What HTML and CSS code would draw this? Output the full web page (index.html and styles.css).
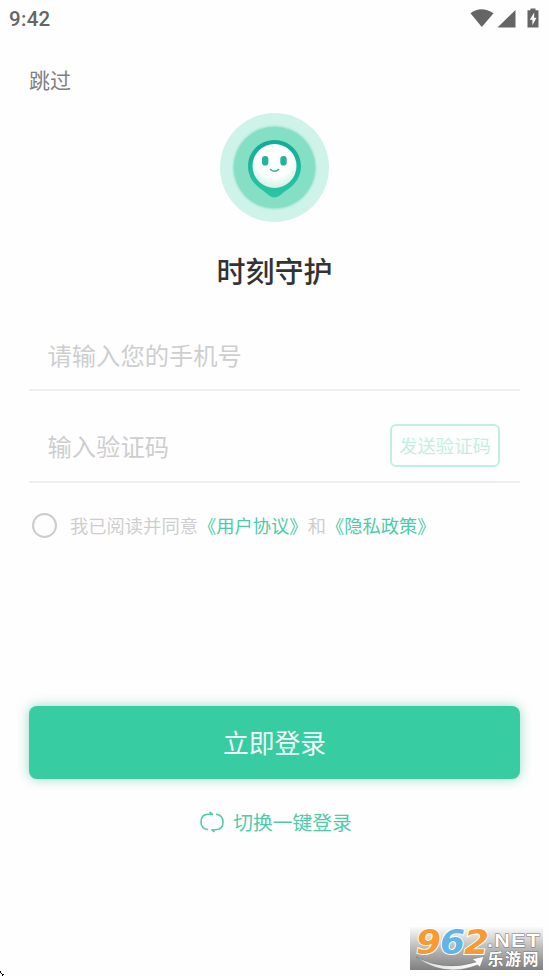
FILE: index.html
```html
<!DOCTYPE html>
<html lang="zh-CN">
<head>
<meta charset="utf-8">
<title>时刻守护</title>
<link rel="stylesheet" href="styles.css">
</head>
<body>
<div class="screen">
  <header class="status">
    <span class="clock">9:42</span>
    <svg class="status-icons" width="72" height="24" viewBox="0 0 72 24">
      <path d="M1.5 6.2Q12 -1.5 24.5 6.2L12.8 20Z"/>
      <path d="M46.500 3V20.5H28.5Z"/>
      <path d="M61.5 3.2V1.5H66.5V3.2H69.5V20.5H58.5V3.2Z"/>
      <path class="bolt" d="M65.2 5.5L60.8 12.8H63.4V18.2L67.5 10.8H65.1Z"/>
    </svg>
  </header>
  <a class="skip">跳过</a>
  <section class="brand">
    <svg class="logo" width="110" height="110" viewBox="0 0 110 110">
      <defs>
        <linearGradient id="pin" x1="0" y1="0" x2="0" y2="1">
          <stop offset="0" stop-color="#10ab9a"/><stop offset="1" stop-color="#2cc6a3"/>
        </linearGradient>
        <radialGradient id="face" cx=".5" cy=".36" r=".65">
          <stop offset=".6" stop-color="#fff"/><stop offset="1" stop-color="#d0f1e6"/>
        </radialGradient>
        <filter id="soft"><feGaussianBlur stdDeviation="1"/></filter>
      </defs>
      <circle cx="54.5" cy="54.5" r="54.5" fill="#cff3e8"/>
      <circle cx="54.5" cy="54.5" r="41.3" fill="#85dfc4" filter="url(#soft)"/>
      <circle cx="54.5" cy="54.5" r="40.5" fill="#85dfc4"/>
      <path d="M54.5 27C69 27 81 38.5 81 53C81 64 75 71 69 75.500C63 79.500 59 84.500 54.500 84.500C50 84.500 46 79.500 40 75.500C34 71 28 64 28 53C28 38.500 40 27 54.500 27Z" fill="url(#pin)"/>
      <circle cx="54.5" cy="53" r="22" fill="url(#face)"/>
      <rect x="42" y="43" width="6.4" height="9.5" rx="3.1" fill="#20b49c"/>
      <rect x="60.300" y="43" width="6.400" height="9.500" rx="3.100" fill="#20b49c"/>
      <path d="M50.500 56.500Q54.500 60 58.500 56.500" fill="none" stroke="#20b49c" stroke-width="1.600" stroke-linecap="round"/>
    </svg>
    <h1>时刻守护</h1>
  </section>
  <main class="form">
    <div class="field phone">请输入您的手机号</div>
    <div class="field code"><span>输入验证码</span><button class="send">发送验证码</button></div>
    <div class="agree">
      <span class="radio"></span>
      <span>我已阅读并同意<a>《用户协议》</a>和<a>《隐私政策》</a></span>
    </div>
    <button class="login">立即登录</button>
    <a class="switch">
      <svg width="24" height="22" viewBox="0 0 24 22">
        <path d="M8 18.800Q1 17.500 1 11Q1 3.200 8.500 3.200H13M9.500 .8L13 3.600M16 3.200Q23 4 23 11Q23 18.800 15.500 18.800H11.500M14.500 21L11.500 18.500"/>
      </svg>
      <span>切换一键登录</span>
    </a>
  </main>
  <svg class="watermark" width="133" height="53" viewBox="0 -10 133 53">
    <defs>
      <linearGradient id="plate" x1="0" y1="0" x2="0" y2="1">
        <stop offset="0" stop-color="#fafafa"/><stop offset=".5" stop-color="#b8b8b8"/><stop offset="1" stop-color="#808080"/>
      </linearGradient>
      <linearGradient id="swoosh"><stop offset="0" stop-color="#ddd"/><stop offset="1" stop-color="#fff"/></linearGradient>
    </defs>
    <rect width="133" height="43" fill="url(#plate)"/>
    <path d="M6 30Q35 45 66 35L62 32L74 29.500L70 40L67.500 38Q34 51 6 30Z" fill="url(#swoosh)" stroke="#777" stroke-width=".5"/>
    <g class="digits">
      <text x="6" y="27" textLength="25" lengthAdjust="spacingAndGlyphs" fill="#f79a32">9</text>
      <text x="30" y="27" textLength="25" lengthAdjust="spacingAndGlyphs" fill="#62b5e6">6</text>
      <text x="54" y="27" textLength="25" lengthAdjust="spacingAndGlyphs" fill="#f79a32">2</text>
    </g>
    <text class="net" x="77" y="19.500" textLength="54" lengthAdjust="spacingAndGlyphs">.NET</text>
    <text class="cn" x="77.500" y="38" textLength="51">乐游网</text>
  </svg>
  <svg class="corner" width="5" height="5" viewBox="0 0 5 5"><path d="M0 0H1V2H2V3H1V2H0ZM2 3H4V4H3V5H2Z"/></svg>
</div>
</body>
</html>
```
FILE: styles.css
```css
* { box-sizing: border-box; }
body {
  margin: 0;
  background: #fefefe;
  font-family: "Noto Sans CJK SC", sans-serif;
}
.screen {
  position: relative;
  width: 549px;
  height: 976px;
  overflow: hidden;
}
.status {
  display: flex;
  justify-content: space-between;
  height: 38px;
  padding: 7px 8px 0 9px;
}
.clock {
  font: 500 20.500px/24px Roboto, sans-serif;
  letter-spacing: .3px;
  color: #656565;
}
.status-icons { fill: #656565; }
.status-icons .bolt { fill: #fff; }
.skip {
  display: block;
  height: 75px;
  padding: 26px 29px 0;
  font-size: 21px;
  line-height: 30px;
  color: #808080;
}
.brand {
  display: flex;
  flex-direction: column;
  align-items: center;
}
.logo { display: block; }
h1 {
  margin: 27px 0 0;
  font-size: 29px;
  line-height: 40px;
  font-weight: 500;
  color: #333;
}
.form { padding: 0 29px; }
.field {
  display: flex;
  align-items: center;
  justify-content: space-between;
  padding: 0 20px 0 18.500px;
  border-bottom: 2px solid #eee;
  font-size: 24.3px;
  color: #cecece;
}
.phone { height: 72px; margin-top: 29px; }
.code { height: 92px; padding-top: 18px; }
.send {
  width: 110px;
  height: 43px;
  padding: 0;
  border: 2px solid #c3efe2;
  border-radius: 6px;
  background: none;
  color: #c3efe2;
  font: 400 18.300px "Noto Sans CJK SC", sans-serif;
}
.agree {
  display: flex;
  align-items: center;
  gap: 13px;
  height: 30px;
  margin-top: 27px;
  padding-left: 3px;
  font-size: 18.300px;
  color: #cecece;
  white-space: nowrap;
}
.radio {
  width: 25px;
  height: 25px;
  border: 2px solid #ccc;
  border-radius: 50%;
}
.agree a { color: #4fcba8; }
.login {
  display: block;
  width: 491px;
  height: 73px;
  margin-top: 166px;
  padding: 0 0 2px;
  border: 0;
  border-radius: 8px;
  background: #38cca3;
  box-shadow: 0 0 12px rgba(56, 180, 145, .5);
  color: #f0fbf8;
  font: 400 25.800px "Noto Sans CJK SC", sans-serif;
}
.switch {
  display: flex;
  justify-content: center;
  align-items: center;
  gap: 9px;
  height: 30px;
  margin-top: 28px;
  padding-left: 3px;
  font-size: 19.800px;
  line-height: 28px;
  color: #4fcba8;
}
.switch svg { fill: none; stroke: #4fcba8; stroke-width: 1.600px; }
.watermark {
  position: absolute;
  left: 410px;
  top: 917px;
}
.digits {
  font: italic 700 33px "DejaVu Sans", sans-serif;
  stroke: #fff;
  stroke-width: 1.800px;
  paint-order: stroke;
}
.net {
  font: 700 18px "Liberation Sans", sans-serif;
  letter-spacing: 1px;
  fill: #fff;
  stroke: #777;
  stroke-width: 1px;
  paint-order: stroke;
}
.cn {
  font: 700 16px "Noto Sans CJK SC", sans-serif;
  fill: #fff;
  stroke: #777;
  stroke-width: 1px;
  paint-order: stroke;
}
.corner {
  position: absolute;
  left: 0;
  top: 971px;
}
```
